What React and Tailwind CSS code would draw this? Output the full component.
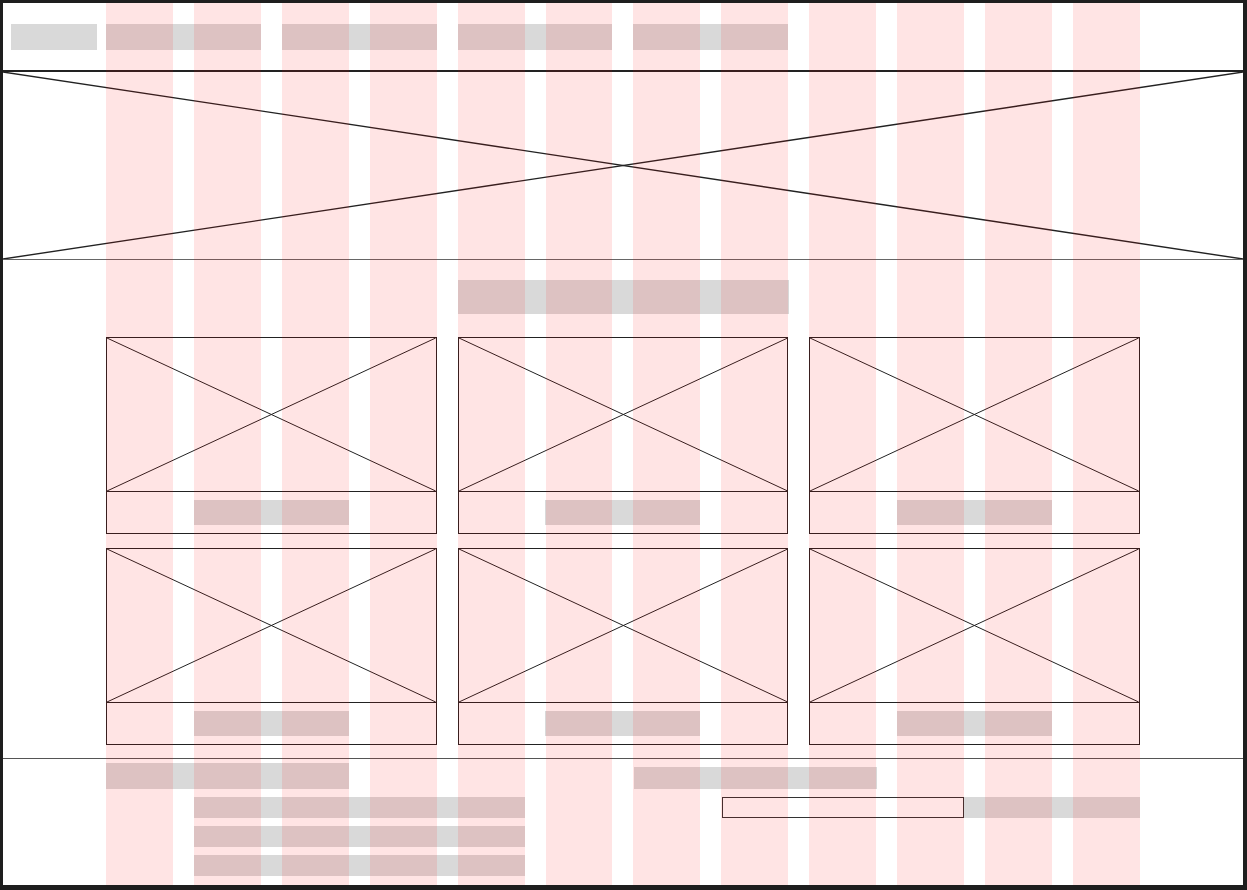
import React from "react";

// Diagonal cross used for every image placeholder
function Cross({ stroke = 1 }) {
  return (
    <svg className="absolute inset-0 w-full h-full" viewBox="0 0 100 100" preserveAspectRatio="none">
      <line x1="0" y1="0" x2="100" y2="100" stroke="#222" strokeWidth={stroke} vectorEffect="non-scaling-stroke" />
      <line x1="100" y1="0" x2="0" y2="100" stroke="#222" strokeWidth={stroke} vectorEffect="non-scaling-stroke" />
    </svg>
  );
}

function Card() {
  return (
    <div className="border border-[#222] bg-white">
      <div className="relative h-[154px] border-b border-[#222]">
        <Cross />
      </div>
      <div className="h-[41px] flex items-center justify-center">
        <div className="w-[155px] h-[25px] bg-[#d9d9d9]" />
      </div>
    </div>
  );
}

export default function App() {
  const cols = Array.from({ length: 12 });
  const navSpans = [0, 1, 2, 3];
  const cards = [0, 1, 2, 3, 4, 5];

  return (
    <div className="w-[1247px] h-[890px] bg-[#1e1e1e] pt-[3px] pl-[3px] pr-[4px] pb-[5px]">
      <div className="relative h-full bg-white flex flex-col">
        {/* header */}
        <div className="h-[69px] border-b-2 border-[#222] flex items-center">
          <div className="w-[103px] pl-[8px]">
            <div className="w-[86px] h-[26px] bg-[#d9d9d9]" />
          </div>
          <div className="w-[1034px] grid grid-cols-12 gap-x-[21px]">
            {navSpans.map((i) => (
              <div key={i} className="col-span-2 h-[26px] bg-[#d9d9d9]" />
            ))}
          </div>
        </div>

        {/* hero */}
        <div className="relative h-[188px] border-b border-[#666]">
          <Cross stroke={1.4} />
        </div>

        {/* main content */}
        <div className="h-[498px] pt-[20px] flex flex-col">
          <div className="w-[331px] h-[34px] mx-auto bg-[#d9d9d9]" />
          <div className="w-[1034px] mx-auto mt-[23px] grid grid-cols-3 gap-x-[21px] gap-y-[14px]">
            {cards.map((i) => (
              <Card key={i} />
            ))}
          </div>
        </div>

        {/* footer */}
        <div className="flex-1 border-t border-[#555]">
          <div className="w-[1034px] mx-auto grid grid-cols-12 gap-x-[21px]">
            <div className="col-span-6 flex flex-col">
              <div className="w-[243px] h-[26px] mt-[4px] bg-[#d9d9d9]" />
              <div className="ml-[88px] w-[331px] mt-[8px] flex flex-col gap-[8px]">
                <div className="h-[21px] bg-[#d9d9d9]" />
                <div className="h-[21px] bg-[#d9d9d9]" />
                <div className="h-[21px] bg-[#d9d9d9]" />
              </div>
            </div>
            <div className="col-span-6 flex flex-col">
              <div className="w-[243px] h-[22px] mt-[8px] bg-[#d9d9d9]" />
              <div className="ml-[88px] mt-[8px] flex">
                <div className="w-[242px] h-[21px] border border-[#333] bg-white" />
                <div className="flex-1 h-[21px] bg-[#d9d9d9]" />
              </div>
            </div>
          </div>
        </div>

        {/* 12 column grid overlay */}
        <div className="absolute inset-0 pointer-events-none flex justify-center">
          <div className="w-[1034px] h-full grid grid-cols-12 gap-x-[21px]">
            {cols.map((_, i) => (
              <div key={i} className="h-full bg-[#ff00001b]" />
            ))}
          </div>
        </div>
      </div>
    </div>
  );
}
